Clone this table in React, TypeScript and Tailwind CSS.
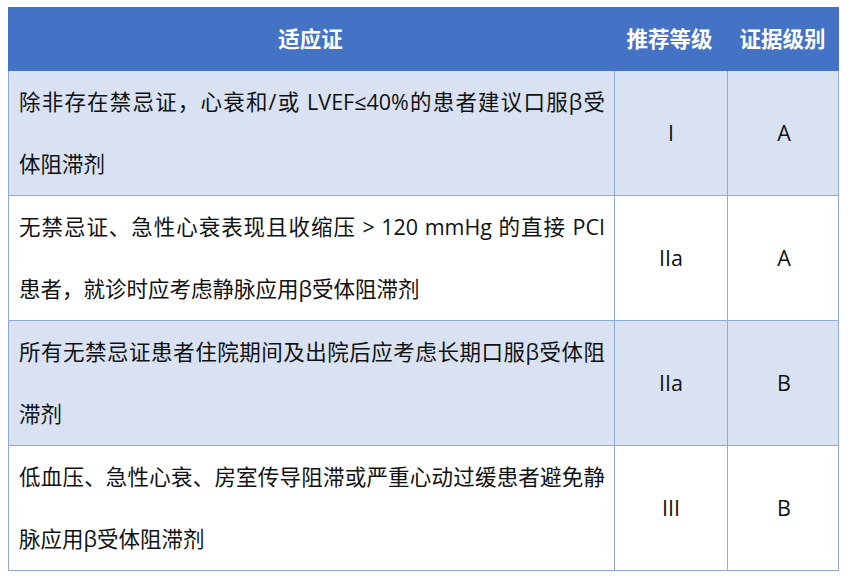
import React from 'react';

const rows = [
  {
    lines: ['除非存在禁忌证，心衰和/或 LVEF≤40%的患者建议口服β受', '体阻滞剂'],
    grade: 'I',
    level: 'A',
    shaded: true,
  },
  {
    lines: ['无禁忌证、急性心衰表现且收缩压 > 120 mmHg 的直接 PCI', '患者，就诊时应考虑静脉应用β受体阻滞剂'],
    grade: 'IIa',
    level: 'A',
    shaded: false,
  },
  {
    lines: ['所有无禁忌证患者住院期间及出院后应考虑长期口服β受体阻', '滞剂'],
    grade: 'IIa',
    level: 'B',
    shaded: true,
  },
  {
    lines: ['低血压、急性心衰、房室传导阻滞或严重心动过缓患者避免静', '脉应用β受体阻滞剂'],
    grade: 'III',
    level: 'B',
    shaded: false,
  },
];

export default function App() {
  return (
    <div className="w-[850px] h-[577px] bg-white pt-[7px] pl-[8px] font-['Open_Sans','Noto_Sans_CJK_SC',sans-serif] text-[21.5px] text-[#111]">
      <div className="w-[831px]">
        {/* Header */}
        <div className="grid grid-cols-[605px_113px_113px] h-[64px] bg-[#4472C4] text-white font-bold items-center">
          <div className="text-center">适应证</div>
          <div className="text-center">推荐等级</div>
          <div className="text-center">证据级别</div>
        </div>

        {/* Body rows */}
        {rows.map((row, i) => (
          <div
            key={i}
            className={
              'grid grid-cols-[605px_113px_113px] h-[125px] border-x border-b border-[#8EAADB] ' +
              (row.shaded ? 'bg-[#D9E2F3]' : 'bg-white')
            }
          >
            <div className="flex flex-col justify-center pl-[10px] pr-[9px] leading-[62px]">
              <div className="text-justify [text-align-last:justify]">{row.lines[0]}</div>
              <div>{row.lines[1]}</div>
            </div>
            <div className="flex items-center justify-center border-l border-[#8EAADB]">{row.grade}</div>
            <div className="flex items-center justify-center border-l border-[#8EAADB]">{row.level}</div>
          </div>
        ))}
      </div>
    </div>
  );
}
